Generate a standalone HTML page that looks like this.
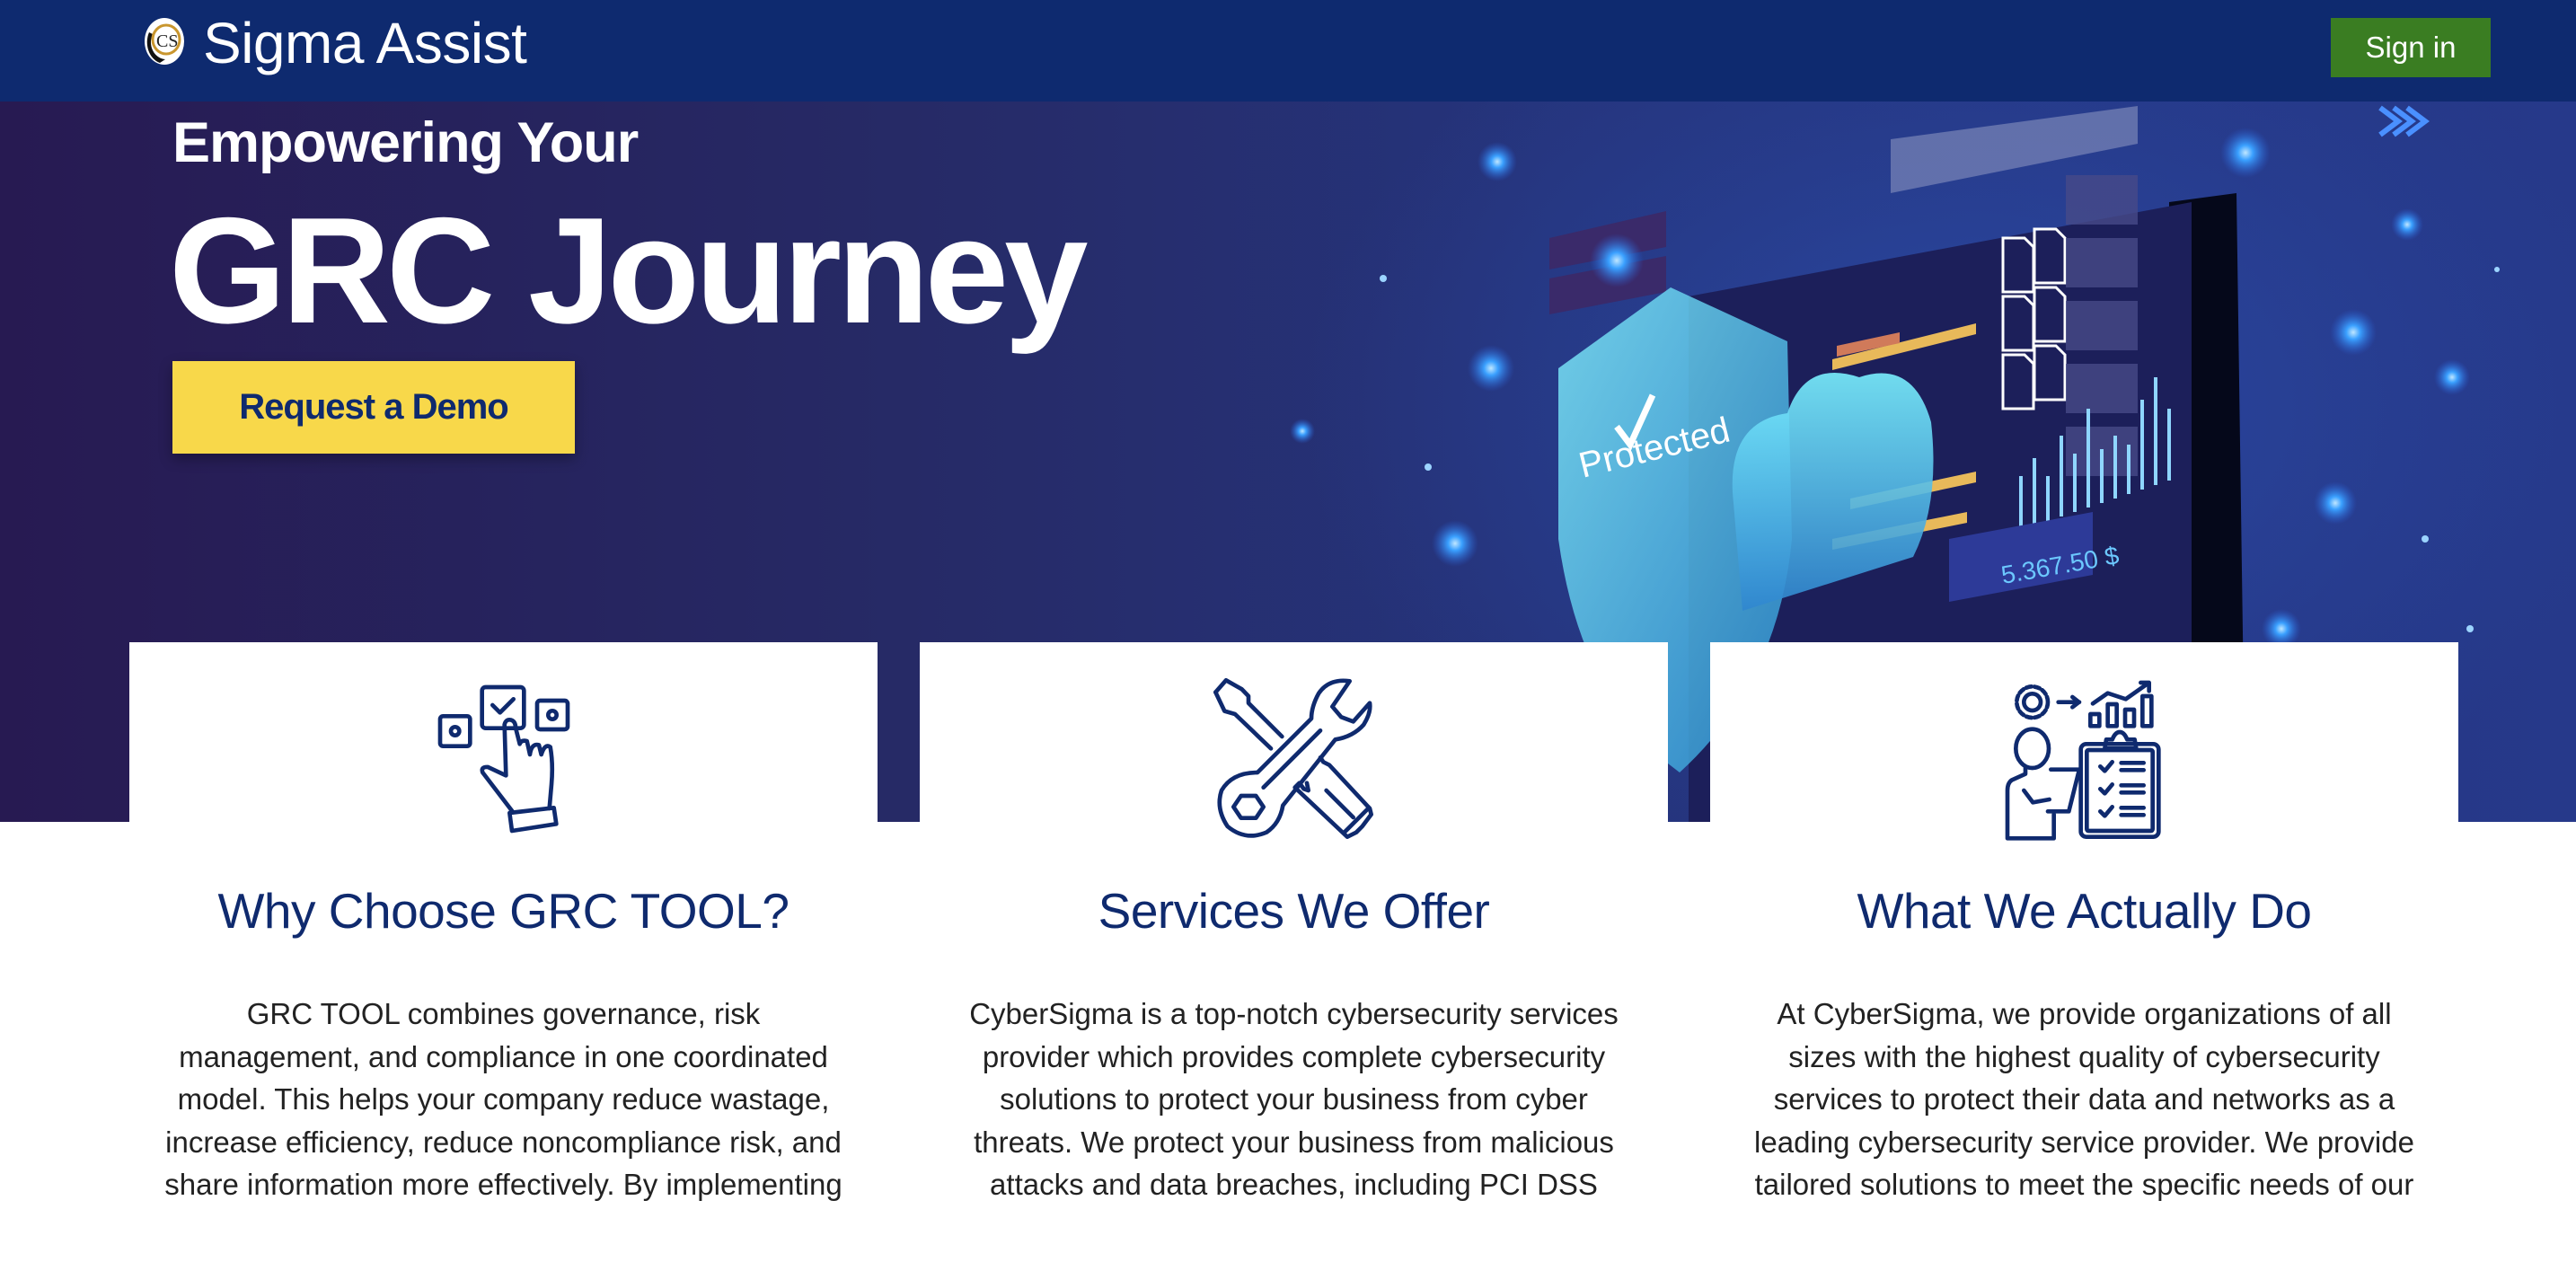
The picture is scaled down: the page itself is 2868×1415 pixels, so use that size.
<!DOCTYPE html>
<html><head><meta charset="utf-8"><style>
*{margin:0;padding:0;box-sizing:border-box}
body{width:2868px;height:1320px;overflow:hidden;background:#fff;font-family:"Liberation Sans",sans-serif;position:relative}
.hdr{position:absolute;left:0;top:0;width:2868px;height:113px;background:#0e2a6f}
.brand{position:absolute;left:226px;top:8px;color:#fff;font-size:64px;line-height:80px;letter-spacing:-.5px}
.signin{position:absolute;left:2595px;top:20px;width:178px;height:66px;background:#3a7d22;color:#fff;font-size:33px;line-height:66px;text-align:center}
.hero{position:absolute;left:0;top:113px;width:2868px;height:802px;background:linear-gradient(90deg,#271a52 0%,#262a66 35%,#25347c 60%,#26398a 100%);overflow:hidden}
.h1{position:absolute;left:192px;top:10px;color:#fff;font-weight:bold;font-size:63px;letter-spacing:-1px}
.h2{position:absolute;left:188px;top:98px;color:#fff;font-weight:bold;font-size:168px;letter-spacing:-5px;line-height:180px}
.demo{position:absolute;left:192px;top:289px;width:448px;height:103px;background:#f8d84a;color:#0f2a6e;font-weight:bold;font-size:40px;line-height:103px;text-align:center;letter-spacing:-1px;box-shadow:0 6px 14px rgba(0,0,0,.3)}
.card{position:absolute;top:715px;width:833px;height:700px;background:#fff;text-align:center}
.card h3{position:absolute;top:267px;left:0;width:100%;font-weight:normal;font-size:55px;color:#0f2a6e;letter-spacing:-.5px}
.card p{position:absolute;top:390px;left:38px;width:757px;font-size:33px;line-height:47.5px;color:#222}
.ic{position:absolute;top:25px;left:316px;width:200px;height:200px}
</style></head><body>
<div class="hdr">
<svg style="position:absolute;left:158px;top:18px" width="50" height="56" viewBox="0 0 50 56"><ellipse cx="25" cy="28" rx="22" ry="26" fill="#fff"/><path d="M8 18 A20 24 0 0 0 20 52 L26 48 A17 19 0 0 1 12 20Z" fill="#111"/><ellipse cx="27" cy="26" rx="15" ry="16" fill="none" stroke="#c9962e" stroke-width="3"/><text x="16" y="34" font-size="20" font-family="Liberation Serif" fill="#222">CS</text></svg>
<div class="brand">Sigma Assist</div>
<div class="signin">Sign in</div>
</div>
<div class="hero">
<svg style="position:absolute;left:0;top:0" width="2868" height="802" viewBox="0 113 2868 802">
<defs>
<radialGradient id="g" cx="50%" cy="50%" r="50%"><stop offset="0" stop-color="#bfe6ff"/><stop offset=".3" stop-color="#3aa0ff"/><stop offset="1" stop-color="#2a5cd0" stop-opacity="0"/></radialGradient>
<radialGradient id="bg" cx="50%" cy="50%" r="50%"><stop offset="0" stop-color="#2e55b8" stop-opacity=".6"/><stop offset="1" stop-color="#2a4aa8" stop-opacity="0"/></radialGradient>
<linearGradient id="sh" x1="0" y1="0" x2="1" y2="1"><stop offset="0" stop-color="#7ee8f8"/><stop offset="1" stop-color="#2c8fd0"/></linearGradient>
<linearGradient id="cl" x1="0" y1="0" x2="0" y2="1"><stop offset="0" stop-color="#7af0ff"/><stop offset="1" stop-color="#2f86cf"/></linearGradient>
</defs>
<ellipse cx="2200" cy="450" rx="750" ry="520" fill="url(#bg)"/>
<polygon points="2415,225 2490,215 2500,915 2415,915" fill="#05081a"/>
<polygon points="1880,330 2440,225 2440,915 1880,915" fill="#1c1f5a"/>
<polygon points="2105,155 2380,118 2380,160 2105,215" fill="#7a86b8" opacity=".7"/>
<polygon points="1725,265 1855,235 1855,275 1725,300" fill="#3a2a6a"/>
<polygon points="1725,310 1855,285 1855,325 1725,350" fill="#3a2a6a"/>
<g fill="none" stroke="#fff" stroke-width="3"><path d="M2230 265h24l10 10v50h-34z"/><path d="M2265 255h24l10 10v50h-34z"/><path d="M2230 330h24l10 10v50h-34z"/><path d="M2265 320h24l10 10v50h-34z"/><path d="M2230 395h24l10 10v50h-34z"/><path d="M2265 385h24l10 10v50h-34z"/></g>
<g fill="#474a88" opacity=".8"><rect x="2300" y="195" width="80" height="55"/><rect x="2300" y="265" width="80" height="55"/><rect x="2300" y="335" width="80" height="55"/><rect x="2300" y="405" width="80" height="55"/><rect x="2300" y="475" width="80" height="55"/></g>
<g fill="#e8b95a"><polygon points="2040,400 2200,360 2200,372 2040,412"/><polygon points="2060,555 2200,525 2200,537 2060,567"/><polygon points="2040,600 2190,570 2190,582 2040,612"/></g>
<polygon points="2045,385 2115,370 2115,382 2045,397" fill="#d07a5a"/>
<g stroke="#8fd6ff" stroke-width="4"><path d="M2250 590v-60M2265 585v-75M2280 580v-50M2295 575v-90M2310 570v-65M2325 565v-110M2340 560v-60M2355 555v-70M2370 550v-55M2385 545v-100M2400 540v-120M2415 535v-80"/></g>
<polygon points="2170,600 2330,570 2330,640 2170,670" fill="#2d3a98"/>
<text x="2230" y="650" fill="#6cc8ff" font-size="28" transform="rotate(-10 2230 650)">5.367.50 $</text>
<path d="M1735 410 L1860 320 L1990 380 L1995 600 Q1980 760 1870 860 Q1760 780 1735 600Z" fill="url(#sh)" opacity=".85"/>
<path d="M1930 560 Q1920 470 1990 460 Q2010 400 2070 420 Q2130 400 2150 470 Q2160 560 2130 620 L1940 680Z" fill="url(#cl)" opacity=".9"/>
<path d="M1800 475 L1815 495 L1840 440" stroke="#fff" stroke-width="7" fill="none"/>
<text x="1762" y="532" fill="#fff" font-size="40" transform="rotate(-14 1762 532)">Protected</text>
<g fill="url(#g)"><circle cx="1667" cy="180" r="22"/><circle cx="1660" cy="410" r="26"/><circle cx="1620" cy="605" r="26"/><circle cx="1800" cy="290" r="30"/><circle cx="2500" cy="170" r="28"/><circle cx="2620" cy="370" r="26"/><circle cx="2600" cy="560" r="24"/><circle cx="2540" cy="700" r="22"/><circle cx="2730" cy="420" r="20"/><circle cx="1520" cy="760" r="22"/><circle cx="2680" cy="250" r="18"/><circle cx="1450" cy="480" r="14"/></g>
<g fill="#9cd4ff"><circle cx="1540" cy="310" r="4"/><circle cx="1590" cy="520" r="4"/><circle cx="1700" cy="720" r="4"/><circle cx="2750" cy="700" r="4"/><circle cx="2700" cy="600" r="4"/><circle cx="1640" cy="880" r="4"/><circle cx="2780" cy="300" r="3"/></g>
<path d="M2650 120l20 15-20 15M2665 120l20 15-20 15M2680 120l20 15-20 15" stroke="#4a90ff" stroke-width="6" fill="none"/>
</svg>
<div class="h1">Empowering Your</div>
<div class="h2">GRC Journey</div>
<div class="demo">Request a Demo</div>
</div>

<div class="card" style="left:144px">
<svg class="ic" viewBox="0 0 600 600" fill="none" stroke="#0f2a6e" stroke-width="14" stroke-linejoin="round" stroke-linecap="round">
<rect x="90" y="172" width="100" height="100" rx="10"/><circle cx="140" cy="222" r="14"/>
<rect x="230" y="75" width="140" height="137" rx="12"/><path d="M265 135l25 25 45-45"/>
<rect x="414" y="120" width="102" height="96" rx="10"/><circle cx="465" cy="168" r="14"/>
<path d="M330 488 L232 360 Q225 340 250 342 L310 370 L305 200 Q310 180 328 185 Q342 190 342 210 L356 265 Q360 250 380 255 L390 300 Q395 262 420 268 L428 300 Q440 262 458 275 Q468 330 462 400 L455 480"/>
<path d="M322 495 L470 478 L478 532 L330 555Z"/>
</svg>
<h3>Why Choose GRC TOOL?</h3>
<p>GRC TOOL combines governance, risk management, and compliance in one coordinated model. This helps your company reduce wastage, increase efficiency, reduce noncompliance risk, and share information more effectively. By implementing</p>
</div>

<div class="card" style="left:1024px">
<svg class="ic" viewBox="0 0 600 600" fill="none" stroke="#0f2a6e" stroke-width="14" stroke-linejoin="round" stroke-linecap="round">
<path d="M40 92 L75 52 L128 82 L150 105 L150 128 L262 240"/>
<path d="M40 92 L70 155 L105 165 L225 280"/>
<path d="M488 55 Q420 45 385 95 Q360 140 360 180 L180 360 Q95 360 60 420 Q40 480 80 540 Q140 590 210 560 Q255 530 265 470 L440 250 Q500 240 535 200 Q560 160 555 128 L500 190 L460 175 L430 140 Z"/>
<path d="M200 410 L390 220"/>
<polygon points="100,475 125,438 175,438 200,475 175,512 125,512"/>
<path d="M390 310 L400 325 L420 335 L555 480 L560 500 L530 540 L510 560 L480 575 L305 410 L320 395 L335 415 L350 420 L345 395"/>
<path d="M410 420 L500 510 M470 560 L550 480"/>
</svg>
<h3>Services We Offer</h3>
<p>CyberSigma is a top-notch cybersecurity services provider which provides complete cybersecurity solutions to protect your business from cyber threats. We protect your business from malicious attacks and data breaches, including PCI DSS</p>
</div>

<div class="card" style="left:1904px">
<svg class="ic" viewBox="0 0 600 600" fill="none" stroke="#0f2a6e" stroke-width="14" stroke-linejoin="round" stroke-linecap="round">
<circle cx="128" cy="125" r="28"/><circle cx="128" cy="125" r="52" stroke-dasharray="18 10"/>
<path d="M215 125h70M262 108l22 17-22 17"/>
<rect x="322" y="165" width="30" height="40"/><rect x="380" y="132" width="30" height="73"/><rect x="438" y="150" width="30" height="55"/><rect x="496" y="105" width="30" height="100"/>
<path d="M330 130 L380 95 L440 115 L515 62 M490 60h28v28"/>
<ellipse cx="128" cy="280" rx="55" ry="65"/>
<path d="M105 345 L105 365 L60 385 Q45 395 45 420 L45 580 L200 580 L200 500 M100 420 L130 460 L185 450"/>
<path d="M190 350 L285 350 L250 490 L180 490"/>
<rect x="290" y="265" width="260" height="310" rx="18"/><rect x="310" y="285" width="220" height="270" rx="6"/>
<path d="M375 250 L395 250 Q405 225 420 225 Q435 225 445 250 L470 250 L475 280 L370 280Z"/>
<path d="M355 340l15 15 25-30M355 415l15 15 25-30M355 490l15 15 25-30"/>
<path d="M425 328h75M425 352h75M425 403h75M425 427h75M425 478h75M425 502h75"/>
</svg>
<h3>What We Actually Do</h3>
<p>At CyberSigma, we provide organizations of all sizes with the highest quality of cybersecurity services to protect their data and networks as a leading cybersecurity service provider. We provide tailored solutions to meet the specific needs of our</p>
</div>
</body></html>
